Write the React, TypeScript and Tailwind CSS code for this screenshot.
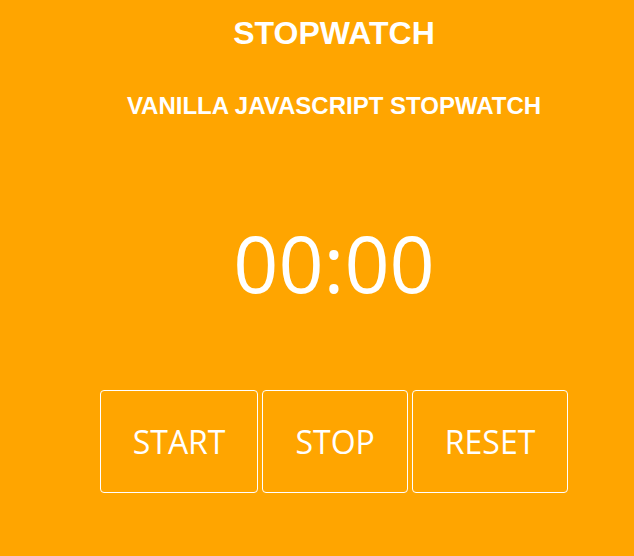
export default function App() {
  const buttons = ["START", "STOP", "RESET"];
  return (
    <div className="min-h-[556px] w-full bg-[#ffa500] pl-[34px] text-white">
      <div className="flex flex-col items-center">
        <h1 className="mt-[15px] font-['Liberation_Sans',Arial,sans-serif] text-[32px] font-bold leading-[36px]">
          STOPWATCH
        </h1>
        <h2 className="mt-[41px] font-['Liberation_Sans',Arial,sans-serif] text-[24px] font-bold leading-[28px]">
          VANILLA JAVASCRIPT STOPWATCH
        </h2>
        <div className="mt-[103px] font-['Open_Sans',sans-serif] text-[79px] leading-[79px]">
          00:00
        </div>
        <div className="mt-[88px] flex gap-[4px]">
          {buttons.map((label) => (
            <button
              key={label}
              className="h-[103px] rounded-[4px] border border-white bg-transparent px-8 font-['Open_Sans',sans-serif] text-[32px] text-white"
            >
              {label}
            </button>
          ))}
        </div>
      </div>
    </div>
  );
}
